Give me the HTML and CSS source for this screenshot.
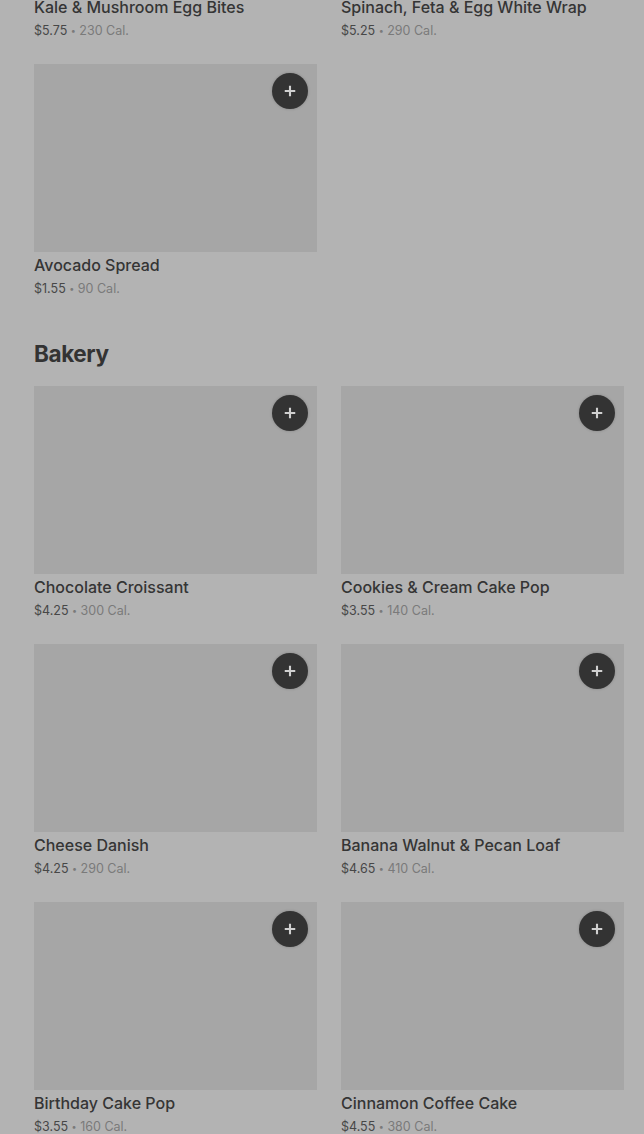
FILE: index.html
```html
<!DOCTYPE html>
<html lang="en">

<head>
  <meta charset="UTF-8">
  <meta name="viewport" content="width=device-width, initial-scale=1.0">
  <title>Menu</title>
  <link rel="stylesheet" href="styles.css">
</head>

<body>
  <div class="menu">
    <section class="section section-first">
      <div class="grid">
        <div class="card">
          <div class="thumb"><button class="add"><svg viewBox="0 0 16 16"><path d="M8 2v12M2 8h12" /></svg></button></div>
          <div class="name">Kale &amp; Mushroom Egg Bites</div>
          <div class="meta"><span class="price">$5.75</span> <span class="dot">•</span> 230 Cal.</div>
        </div>
        <div class="card">
          <div class="thumb"><button class="add"><svg viewBox="0 0 16 16"><path d="M8 2v12M2 8h12" /></svg></button></div>
          <div class="name">Spinach, Feta &amp; Egg White Wrap</div>
          <div class="meta"><span class="price">$5.25</span> <span class="dot">•</span> 290 Cal.</div>
        </div>
        <div class="card">
          <div class="thumb"><button class="add"><svg viewBox="0 0 16 16"><path d="M8 2v12M2 8h12" /></svg></button></div>
          <div class="name">Avocado Spread</div>
          <div class="meta"><span class="price">$1.55</span> <span class="dot">•</span> 90 Cal.</div>
        </div>
      </div>
    </section>

    <section class="section">
      <h2 class="title">Bakery</h2>
      <div class="grid">
        <div class="card">
          <div class="thumb"><button class="add"><svg viewBox="0 0 16 16"><path d="M8 2v12M2 8h12" /></svg></button></div>
          <div class="name">Chocolate Croissant</div>
          <div class="meta"><span class="price">$4.25</span> <span class="dot">•</span> 300 Cal.</div>
        </div>
        <div class="card">
          <div class="thumb"><button class="add"><svg viewBox="0 0 16 16"><path d="M8 2v12M2 8h12" /></svg></button></div>
          <div class="name">Cookies &amp; Cream Cake Pop</div>
          <div class="meta"><span class="price">$3.55</span> <span class="dot">•</span> 140 Cal.</div>
        </div>
        <div class="card">
          <div class="thumb"><button class="add"><svg viewBox="0 0 16 16"><path d="M8 2v12M2 8h12" /></svg></button></div>
          <div class="name">Cheese Danish</div>
          <div class="meta"><span class="price">$4.25</span> <span class="dot">•</span> 290 Cal.</div>
        </div>
        <div class="card">
          <div class="thumb"><button class="add"><svg viewBox="0 0 16 16"><path d="M8 2v12M2 8h12" /></svg></button></div>
          <div class="name">Banana Walnut &amp; Pecan Loaf</div>
          <div class="meta"><span class="price">$4.65</span> <span class="dot">•</span> 410 Cal.</div>
        </div>
        <div class="card">
          <div class="thumb"><button class="add"><svg viewBox="0 0 16 16"><path d="M8 2v12M2 8h12" /></svg></button></div>
          <div class="name">Birthday Cake Pop</div>
          <div class="meta"><span class="price">$3.55</span> <span class="dot">•</span> 160 Cal.</div>
        </div>
        <div class="card">
          <div class="thumb"><button class="add"><svg viewBox="0 0 16 16"><path d="M8 2v12M2 8h12" /></svg></button></div>
          <div class="name">Cinnamon Coffee Cake</div>
          <div class="meta"><span class="price">$4.55</span> <span class="dot">•</span> 380 Cal.</div>
        </div>
      </div>
    </section>
  </div>
</body>

</html>
```

FILE: styles.css
```css
html,
body {
  margin: 0;
  height: 100%;
  overflow: hidden;
}

body {
  background-color: #b3b3b3;
  font-family: Inter, "Noto Sans", sans-serif;
  color: #333;
}

.menu {
  padding: 0 20px 0 34px;
  margin-top: -194px;
}

.section {
  margin-top: 37px;
}

.section-first {
  margin-top: 0;
}

.title {
  margin: 0 0 14px;
  font-size: 22.5px;
  line-height: 36px;
  font-weight: 700;
  letter-spacing: -0.4px;
  color: #333;
}

.grid {
  display: grid;
  grid-template-columns: repeat(2, 283px);
  column-gap: 24px;
  row-gap: 23px;
}

.thumb {
  position: relative;
  height: 188px;
  background-color: #a6a6a6;
}

.add {
  position: absolute;
  top: 9px;
  right: 9px;
  width: 36px;
  height: 36px;
  padding: 0;
  border: none;
  border-radius: 50%;
  background-color: #333;
  box-shadow: 0 0 3px rgba(0, 0, 0, .2);
  display: flex;
  justify-content: center;
  align-items: center;
}

.add svg {
  width: 14px;
  height: 14px;
  stroke: #d0d0d0;
  stroke-width: 2.4;
  fill: none;
}

.name {
  font-size: 16px;
  line-height: 26px;
  font-weight: 500;
  color: #353535;
  white-space: nowrap;
}

.meta {
  padding-top: 1px;
  font-size: 12.5px;
  line-height: 20px;
  color: #7a7a7a;
}

.price {
  color: #474747;
}

.dot {
  font-size: 9px;
  vertical-align: 1px;
}
```
